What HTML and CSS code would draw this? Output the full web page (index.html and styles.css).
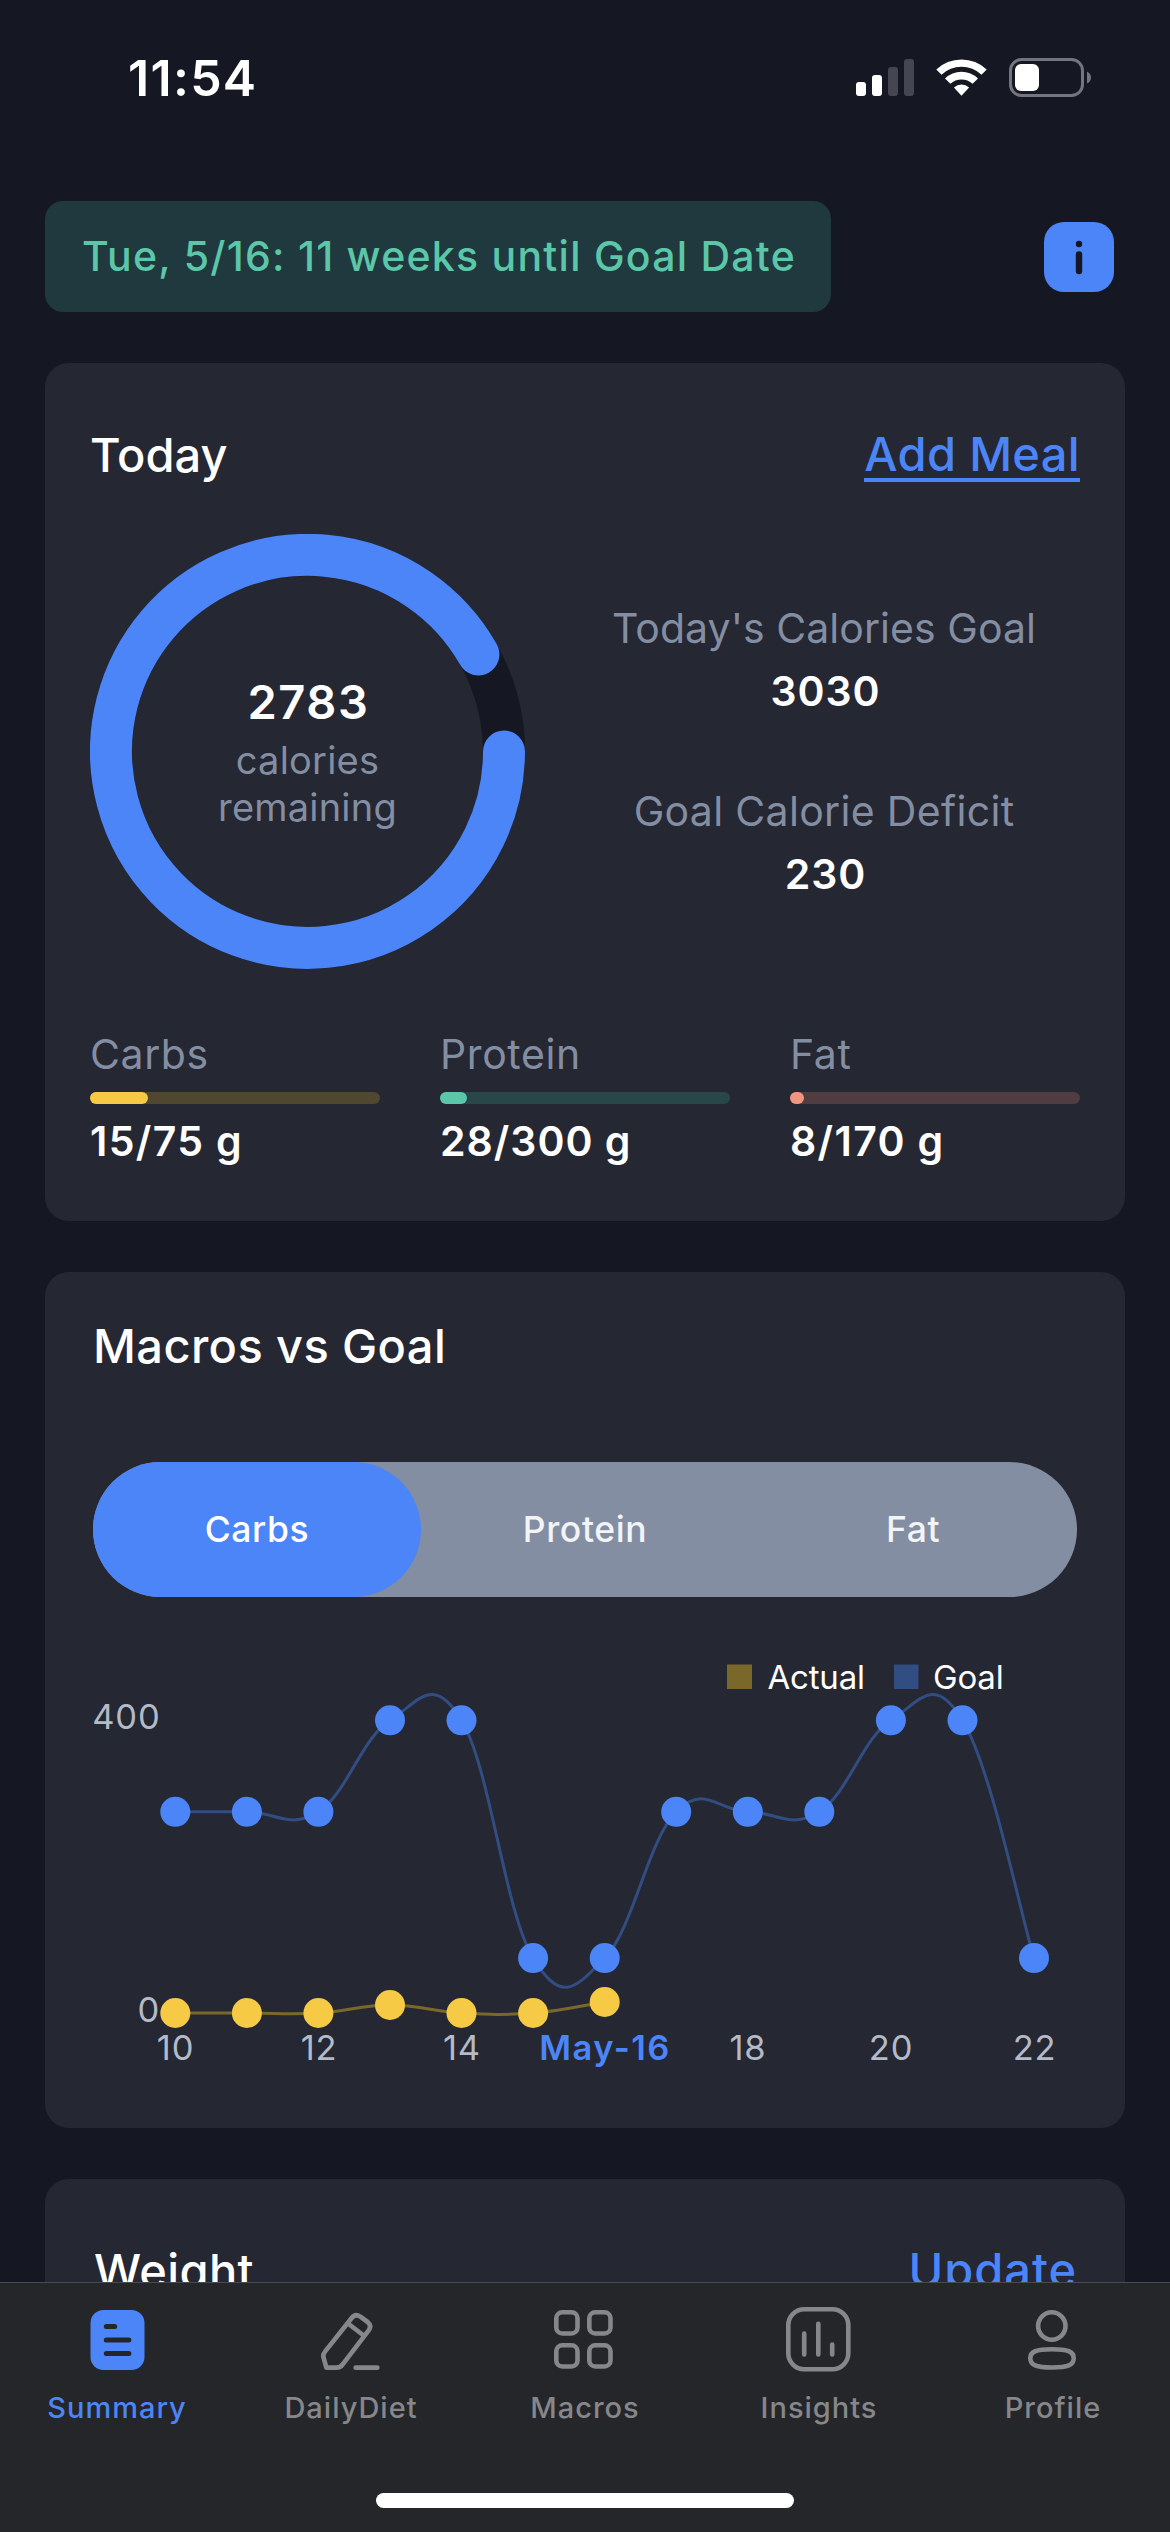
FILE: index.html
```html
<!DOCTYPE html>
<html lang="en">
<head>
<meta charset="utf-8">
<title>Summary</title>
<link rel="stylesheet" href="styles.css">
</head>
<body>
<header class="status">
  <span class="status-time">11:54</span>
  <svg class="status-icons" width="237" height="41" viewBox="0 0 237 41">
    <g fill="#fff">
      <rect x="1" y="25" width="10" height="14" rx="3"/>
      <rect x="17" y="18" width="10" height="21" rx="3"/>
    </g>
    <g fill="#454651">
      <rect x="33" y="10" width="10" height="29" rx="3"/>
      <rect x="49" y="2" width="10" height="37" rx="3"/>
    </g>
    <g fill="#fff">
      <path d="M81.3 12.6a36.5 36.5 0 0 1 50.4 0L126.500 17.800a29 29 0 0 0-40 0Z"/>
      <path d="M90 21.400a23.800 23.800 0 0 1 33 0L117.600 26.800a16.500 16.500 0 0 0-22.200 0Z"/>
      <path d="M98.900 30.400a11.500 11.500 0 0 1 15.200 0L106.500 38.800Z"/>
    </g>
    <rect x="155.500" y="2.500" width="72" height="36" rx="11" fill="none" stroke="#74757e" stroke-width="3"/>
    <rect x="160" y="7" width="24" height="27" rx="6" fill="#fff"/>
    <path d="M232 14.500q4 2 4 6t-4 6Z" fill="#74757e"/>
  </svg>
</header>

<main class="content">
  <div class="top-row">
    <div class="goal-banner">Tue, 5/16: 11 weeks until Goal Date</div>
    <svg class="info" width="70" height="70" viewBox="0 0 70 70">
      <rect width="70" height="70" rx="20" fill="#4b85f8"/>
      <circle cx="35" cy="22" r="3.200" fill="#151722"/>
      <path d="M35 32.500v16.500" stroke="#151722" stroke-width="6.400" stroke-linecap="round"/>
    </svg>
  </div>

  <section class="card today">
    <div class="card-head">
      <h2 class="title today-title">Today</h2>
      <a class="add-meal">Add Meal</a>
    </div>
    <div class="overview">
      <div class="ring">
        <svg class="ring-svg" width="435" height="435" viewBox="0 0 435 435" fill="none" stroke-width="42">
          <circle cx="217.500" cy="217.500" r="196.500" stroke="#151722"/>
          <path d="M414 217.500A196.500 196.500 0 1 1 388.400 120.400" stroke="#4b85f8" stroke-linecap="round"/>
        </svg>
        <div class="ring-text">
          <span class="ring-value">2783</span>
          <span class="ring-label">calories</span>
          <span class="ring-label">remaining</span>
        </div>
      </div>
      <div class="stats">
        <div class="stat"><span class="stat-label tight">Today's Calories Goal</span><span class="stat-value">3030</span></div>
        <div class="stat"><span class="stat-label">Goal Calorie Deficit</span><span class="stat-value">230</span></div>
      </div>
    </div>
    <div class="macros">
      <div class="macro"><span class="macro-label">Carbs</span><div class="bar carbs"><div class="fill" style="width:20%"></div></div><span class="macro-value">15/75 g</span></div>
      <div class="macro"><span class="macro-label">Protein</span><div class="bar protein"><div class="fill" style="width:9.33%"></div></div><span class="macro-value wide">28/300 g</span></div>
      <div class="macro"><span class="macro-label">Fat</span><div class="bar fat"><div class="fill" style="width:4.7%"></div></div><span class="macro-value">8/170 g</span></div>
    </div>
  </section>

  <section class="card trends">
    <h2 class="title">Macros vs Goal</h2>
    <div class="segments">
      <span class="segment active">Carbs</span>
      <span class="segment">Protein</span>
      <span class="segment">Fat</span>
    </div>
    <svg class="chart" width="984" height="530" viewBox="93 1597 984 530">
      <rect x="727" y="1664.500" width="25" height="24.500" fill="#7a682b"/>
      <text class="legend" x="767.500" y="1689">Actual</text>
      <rect x="894" y="1664.500" width="24.500" height="24.500" fill="#314d82"/>
      <text class="legend" x="933" y="1689">Goal</text>
      <text class="tick" x="160.500" y="1728.500" text-anchor="end">400</text>
      <text class="tick" x="160" y="2021.700" text-anchor="end">0</text>
      <g id="plot"></g>
      <g text-anchor="middle">
        <text class="tick" x="175.500" y="2060">10</text>
        <text class="tick" x="319" y="2060">12</text>
        <text class="tick" x="462" y="2060">14</text>
        <text class="tick current" x="605" y="2060">May-16</text>
        <text class="tick" x="748" y="2060">18</text>
        <text class="tick" x="891" y="2060">20</text>
        <text class="tick" x="1034.500" y="2060">22</text>
      </g>
    </svg>
  </section>

  <section class="card weight">
    <div class="card-head">
      <h2 class="title">Weight</h2>
      <a class="update">Update</a>
    </div>
  </section>
</main>

<nav class="tabs">
  <a class="tab active">
    <svg width="66" height="66" viewBox="0 0 66 66">
      <rect x="6.500" y="3" width="54" height="60" rx="13" fill="#4b85f8"/>
      <path d="M22.300 19.500h8.400M22.300 33h22.600M22.300 46.600h22.600" stroke="#252629" stroke-width="5" stroke-linecap="round"/>
    </svg>
    <span class="tab-label">Summary</span>
  </a>
  <a class="tab">
    <svg width="66" height="66" viewBox="54 51 198 198" fill="none" stroke="#86878b" stroke-width="14" stroke-linejoin="round" stroke-linecap="round">
      <path d="M79 233L70 200Q69 192 75 185L155 84Q166 70 181 80L203 96Q216 107 206 121L128 223Q121 233 109 233Z M146 102L189 135M167 233H232"/>
    </svg>
    <span class="tab-label">DailyDiet</span>
  </a>
  <a class="tab">
    <svg width="66" height="66" viewBox="0 0 66 66" fill="none" stroke="#86878b" stroke-width="4.600">
      <rect x="4.300" y="5.300" width="21.200" height="21.200" rx="6"/>
      <rect x="37.300" y="5.300" width="21.200" height="21.200" rx="6"/>
      <rect x="4.300" y="38.300" width="21.200" height="21.200" rx="6"/>
      <rect x="37.300" y="38.300" width="21.200" height="21.200" rx="6"/>
    </svg>
    <span class="tab-label">Macros</span>
  </a>
  <a class="tab">
    <svg width="66" height="66" viewBox="0 0 66 66" fill="none" stroke="#86878b" stroke-width="4.600" stroke-linecap="round">
      <rect x="2.300" y="2.300" width="60" height="60" rx="16"/>
      <path d="M18.200 26.500v21M32.300 16.800v30.700M46.200 37.500v10"/>
    </svg>
    <span class="tab-label">Insights</span>
  </a>
  <a class="tab">
    <svg width="66" height="66" viewBox="0 0 66 66" fill="none" stroke="#86878b" stroke-width="4.600">
      <circle cx="31.800" cy="19" r="13.700"/>
      <path d="M10.300 51.300C10.300 44.500 16 42.300 32 42.300S53.700 44.500 53.700 51.300 48 60.500 32 60.500 10.300 58 10.300 51.300Z"/>
    </svg>
    <span class="tab-label">Profile</span>
  </a>
  <div class="home-indicator"></div>
</nav>
<script src="chart.js"></script>
</body>
</html>
```
FILE: styles.css
```css
* { box-sizing: border-box; }

body {
  margin: 0;
  position: relative;
  width: 1170px;
  height: 2532px;
  overflow: hidden;
  background: #151722;
  color: #fff;
  font-family: Inter, "Liberation Sans", sans-serif;
}

svg { display: block; flex: none; }

.status {
  display: flex;
  justify-content: space-between;
  align-items: flex-start;
  height: 201px;
  padding: 48px 78px 0 128px;
}
.status-time { font-size: 50px; font-weight: 600; line-height: 60px; letter-spacing: 1.3px; }
.status-icons { margin-top: 9px; }

.content {
  display: flex;
  flex-direction: column;
  gap: 51px;
  padding: 0 45px;
}

.top-row { display: flex; justify-content: space-between; align-items: center; height: 111px; padding-right: 11px; }
.goal-banner {
  display: flex;
  align-items: center;
  width: 786px;
  height: 111px;
  padding: 0 0 1px 37px;
  border-radius: 18px;
  background: #1f393e;
  color: #5bc7a8;
  font-size: 41px;
  font-weight: 500;
  letter-spacing: 1.25px;
  white-space: nowrap;
}

.card { border-radius: 24px; background: #252732; }
.card-head { display: flex; justify-content: space-between; align-items: flex-start; }
.title { margin: 0; font-size: 47px; font-weight: 500; line-height: 56px; letter-spacing: 0.4px; }

.today { height: 858px; padding: 64px 45px 0; }
.today-title { letter-spacing: 0; }
.add-meal {
  margin-top: 2px;
  border-bottom: 4px solid #4b85f8;
  color: #4b85f8;
  font-size: 47px;
  font-weight: 500;
  line-height: 49px;
  letter-spacing: 0.34px;
}
.overview { display: flex; align-items: center; margin-top: 51px; }
.ring { display: grid; width: 435px; height: 435px; }
.ring-svg, .ring-text { grid-area: 1 / 1; }
.ring-text { display: flex; flex-direction: column; align-items: center; justify-content: center; }
.ring-value { margin-bottom: 6px; padding-left: 2px; font-size: 47px; font-weight: 600; line-height: 58px; letter-spacing: 1.6px; }
.ring-label { color: #848ea3; font-size: 38px; line-height: 47px; letter-spacing: 0.2px; }
.stats { display: flex; flex: 1; flex-direction: column; gap: 70px; margin: 0 0 2px 43px; }
.stat { display: flex; flex-direction: column; align-items: center; gap: 13px; font-size: 41px; line-height: 50px; }
.stat-label { color: #848ea3; letter-spacing: 0.32px; }
.stat-label.tight { letter-spacing: 0.05px; }
.stat-value { padding-left: 3px; font-weight: 600; letter-spacing: 0.9px; }

.macros { display: grid; grid-template-columns: repeat(3, 1fr); gap: 60px; margin-top: 60px; font-size: 41px; line-height: 50px; }
.macro { display: flex; flex-direction: column; }
.macro-label { color: #848ea3; letter-spacing: 0.6px; }
.macro-value { font-weight: 600; letter-spacing: 1.35px; }
.macro-value.wide { letter-spacing: 1px; }
.bar { height: 12px; margin: 13px 0 12px; border-radius: 6px; }
.fill { height: 12px; border-radius: 6px; }
.carbs { background: #4f472f; }
.carbs .fill { background: #f6ca45; }
.protein { background: #294649; }
.protein .fill { background: #5bc7a8; }
.fat { background: #4f3d42; }
.fat .fill { background: #f2957f; }

.trends { height: 856px; padding: 46px 48px 0; }
.segments { display: flex; height: 135px; margin-top: 88px; border-radius: 68px; background: #848ea3; }
.segment {
  display: flex;
  flex: 1;
  align-items: center;
  justify-content: center;
  border-radius: 68px;
  color: #f3f4f6;
  font-size: 35.5px;
  font-weight: 500;
  letter-spacing: 0.6px;
}
.segment.active { background: #4b85f8; color: #fff; }

.chart { overflow: visible; }
.legend { fill: #fff; font-size: 33px; letter-spacing: -0.2px; }
.tick { fill: #b3bac8; font-size: 34.5px; letter-spacing: 0.8px; }
.tick.current { fill: #4b85f8; font-weight: 600; letter-spacing: 1.5px; }

.weight { height: 420px; padding: 64px 48px 0 49px; }
.weight .title { letter-spacing: 0.4px; }
.update { margin-top: -1px; color: #4b85f8; font-size: 47px; font-weight: 500; line-height: 56px; letter-spacing: 0.97px; }

.tabs {
  position: absolute;
  left: 0;
  right: 0;
  bottom: 0;
  display: grid;
  grid-template-columns: repeat(5, 1fr);
  grid-template-rows: 210px 15px;
  height: 250px;
  border-top: 1px solid #494a50;
  background: #252629;
}
.tab { display: flex; flex-direction: column; align-items: center; gap: 17px; padding-top: 24px; color: #86878b; }
.tab.active { color: #4b85f8; }
.tab-label { font-size: 29px; font-weight: 500; line-height: 36px; letter-spacing: 1px; }
.home-indicator { grid-column: 1 / -1; justify-self: center; width: 418px; height: 15px; border-radius: 8px; background: #fff; }
```
FILE: chart.js
```js
// Daily carbs from May 10 to May 22, drawn as smoothed lines with point markers.
const goal = [275, 275, 275, 400, 400, 75, 75, 275, 275, 275, 400, 400, 75];
const actual = [0, 0, 0, 11, 0, 0, 15];
const plot = document.getElementById("plot");

function toPoints(values) {
  return values.map((v, i) => [175.3 + i * 71.56, 2013 - v * 0.7318]);
}

function linePath(pts) {
  const at = i => pts[Math.max(0, Math.min(pts.length - 1, i))];
  const control = (i, dir) => {
    const [px, py] = at(i - 1), [nx, ny] = at(i + 1), [x, y] = pts[i];
    return `${(x + dir * 0.2 * (nx - px)).toFixed(1)} ${(y + dir * 0.2 * (ny - py)).toFixed(1)}`;
  };
  return pts.map((p, i) => i === 0
    ? `M${p[0]} ${p[1]}`
    : `C${control(i - 1, 1)} ${control(i, -1)} ${p[0].toFixed(1)} ${p[1].toFixed(1)}`).join("");
}

function draw(values, line, dot) {
  const pts = toPoints(values);
  plot.insertAdjacentHTML("beforeend",
    `<path d="${linePath(pts)}" fill="none" stroke="${line}" stroke-width="3"/>` +
    pts.map(([x, y]) => `<circle cx="${x.toFixed(1)}" cy="${y.toFixed(1)}" r="15" fill="${dot}"/>`).join(""));
}

draw(goal, "#314d82", "#4b85f8");
draw(actual, "#7a682b", "#f6ca45");
```
